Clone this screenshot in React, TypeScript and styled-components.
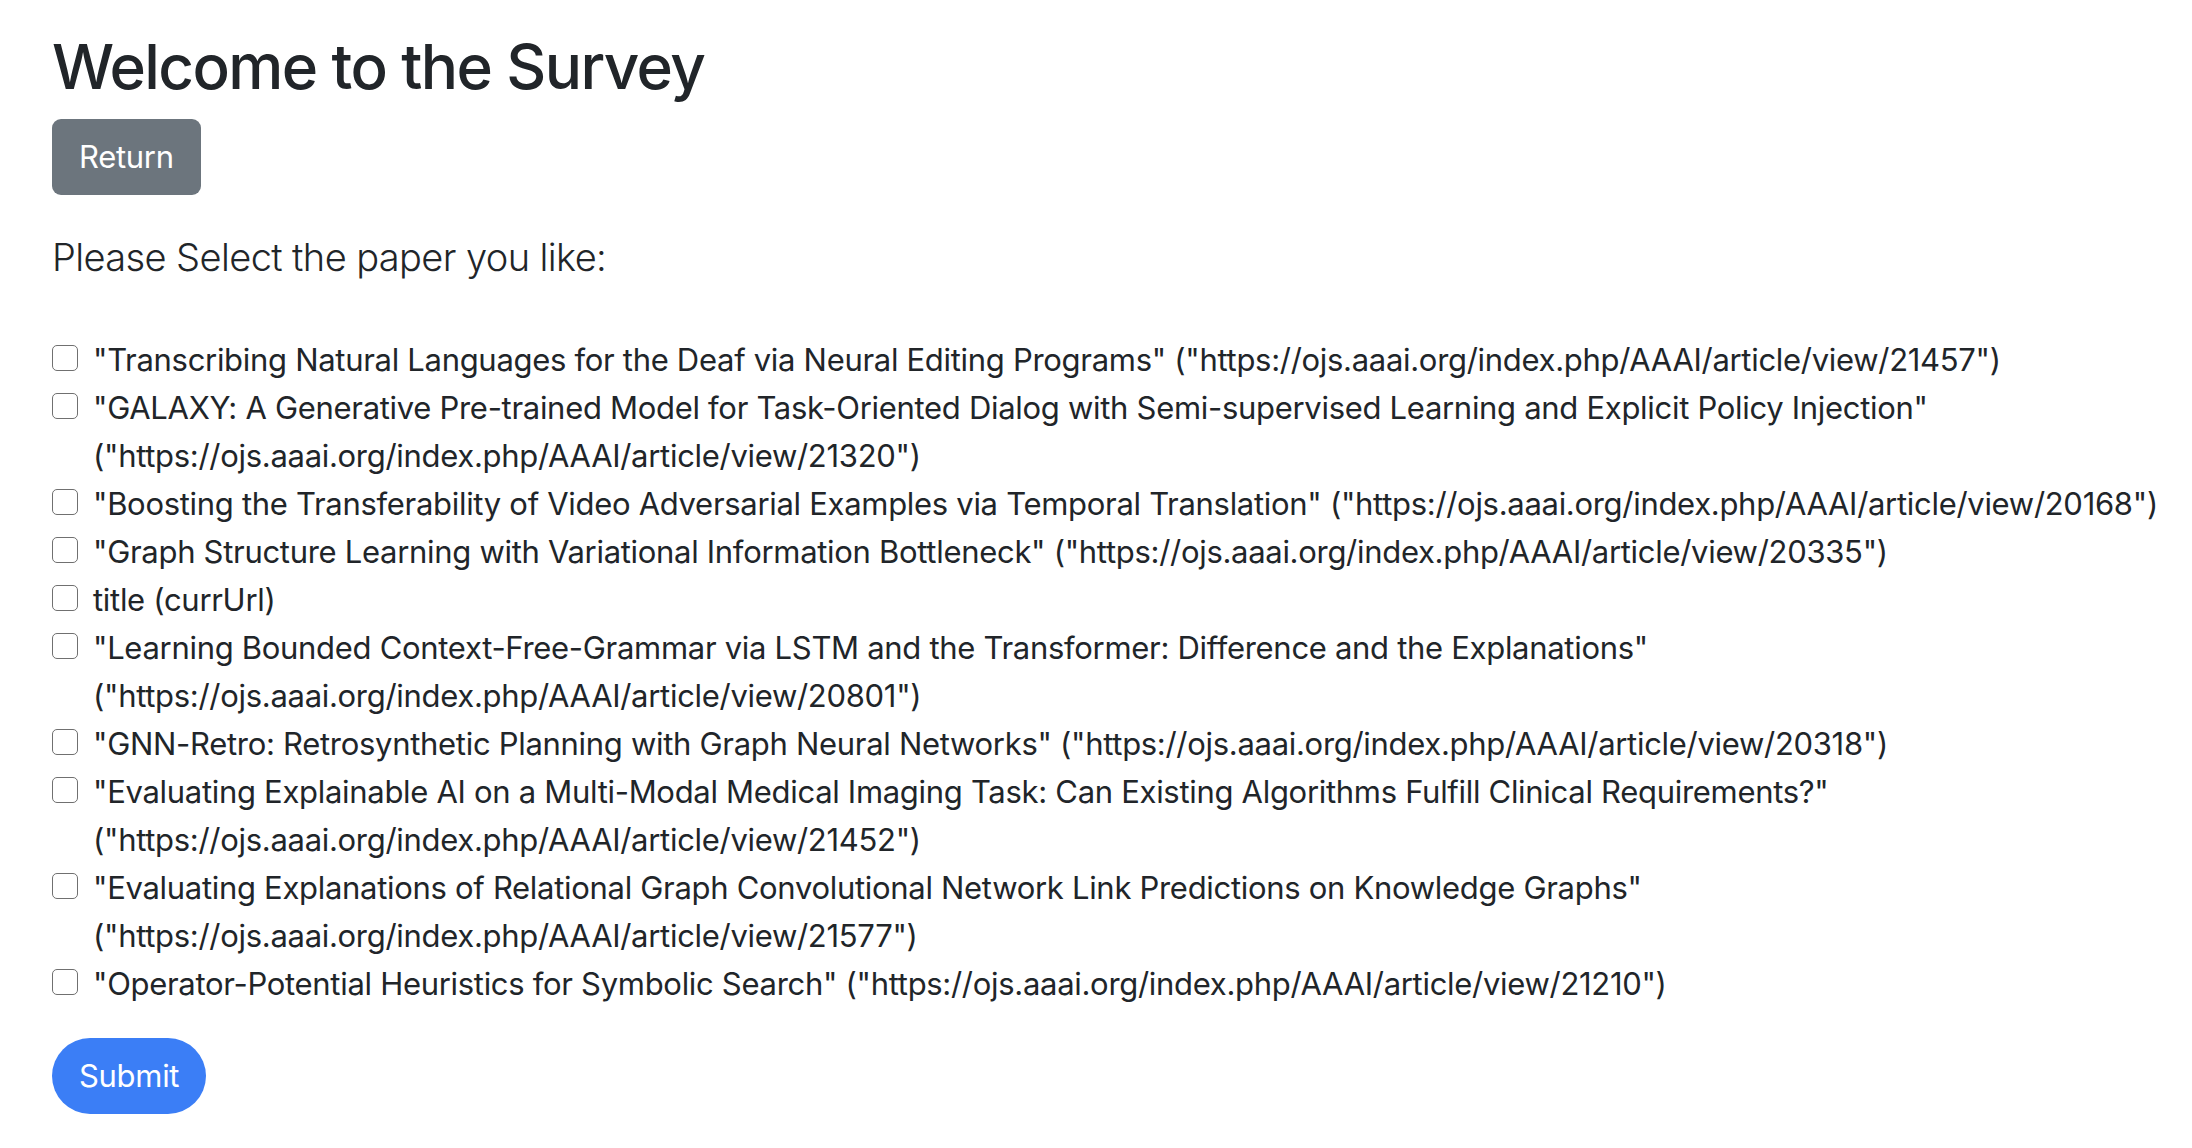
import React from "react";
import styled, { createGlobalStyle } from "styled-components";

const GlobalStyle = createGlobalStyle`
  html, body {
    margin: 0;
    padding: 0;
    background: #ffffff;
  }
  body {
    font-family: Inter, "Noto Sans", "Liberation Sans", sans-serif;
    color: #212529;
    -webkit-font-smoothing: antialiased;
  }
  * { box-sizing: border-box; }
`;

const Page = styled.main`
  display: flex;
  flex-direction: column;
  align-items: flex-start;
  padding: 28px 52px 40px;
`;

const Title = styled.h1`
  margin: 0 0 14px;
  font-size: 62px;
  font-weight: 500;
  line-height: 77px;
  letter-spacing: -1.6px;
`;

const Button = styled.button<{ $variant: "secondary" | "primary" }>`
  display: inline-flex;
  align-items: center;
  justify-content: center;
  height: 76px;
  padding: 0 27px;
  border: none;
  font-family: inherit;
  font-size: 31px;
  font-weight: 400;
  line-height: 48px;
  letter-spacing: -0.3px;
  color: #ffffff;
  cursor: pointer;
  background: ${(p) => (p.$variant === "primary" ? "#3b7ef6" : "#6c757d")};
  border-radius: ${(p) => (p.$variant === "primary" ? "999px" : "9px")};
`;

const Prompt = styled.p`
  margin: 34px 0 50px;
  font-size: 38px;
  font-weight: 300;
  line-height: 57px;
  letter-spacing: -0.6px;
`;

const Form = styled.form`
  display: flex;
  flex-direction: column;
  align-items: flex-start;
`;

const List = styled.div`
  display: flex;
  flex-direction: column;
  margin-bottom: 30px;
`;

const Item = styled.label`
  display: flex;
  align-items: flex-start;
  gap: 15px;
  font-size: 31px;
  font-weight: 400;
  line-height: 48px;
  letter-spacing: -0.3px;
  cursor: pointer;
`;

const Box = styled.input.attrs({ type: "checkbox" })`
  appearance: none;
  -webkit-appearance: none;
  flex-shrink: 0;
  width: 26px;
  height: 26px;
  margin: 9px 0 0;
  border: 1.6px solid #707070;
  border-radius: 5px;
  background: #ffffff;
`;

const Text = styled.span<{ $oneLine: boolean }>`
  display: block;
  white-space: ${(p) => (p.$oneLine ? "nowrap" : "normal")};
`;

const Url = styled.span<{ $newLine: boolean }>`
  display: ${(p) => (p.$newLine ? "block" : "inline")};
  white-space: nowrap;
`;

type Paper = { title: string; url?: string; wrap?: boolean };

const base = "https://ojs.aaai.org/index.php/AAAI/article/view/";

const papers: Paper[] = [
  { title: "Transcribing Natural Languages for the Deaf via Neural Editing Programs", url: "21457" },
  {
    title:
      "GALAXY: A Generative Pre-trained Model for Task-Oriented Dialog with Semi-supervised Learning and Explicit Policy Injection",
    url: "21320",
    wrap: true,
  },
  { title: "Boosting the Transferability of Video Adversarial Examples via Temporal Translation", url: "20168" },
  { title: "Graph Structure Learning with Variational Information Bottleneck", url: "20335" },
  { title: "" },
  {
    title: "Learning Bounded Context-Free-Grammar via LSTM and the Transformer: Difference and the Explanations",
    url: "20801",
    wrap: true,
  },
  { title: "GNN-Retro: Retrosynthetic Planning with Graph Neural Networks", url: "20318" },
  {
    title:
      "Evaluating Explainable AI on a Multi-Modal Medical Imaging Task: Can Existing Algorithms Fulfill Clinical Requirements?",
    url: "21452",
    wrap: true,
  },
  {
    title: "Evaluating Explanations of Relational Graph Convolutional Network Link Predictions on Knowledge Graphs",
    url: "21577",
    wrap: true,
  },
  { title: "Operator-Potential Heuristics for Symbolic Search", url: "21210" },
];

export default function App() {
  return (
    <>
      <GlobalStyle />
      <Page>
        <Title>Welcome to the Survey</Title>
        <Button type="button" $variant="secondary">
          Return
        </Button>
        <Prompt>Please Select the paper you like:</Prompt>
        <Form onSubmit={(e) => e.preventDefault()}>
          <List>
            {papers.map((p, i) => (
              <Item key={i}>
                <Box />
                {p.url ? (
                  <Text $oneLine={!p.wrap}>
                    "{p.title}"{p.wrap ? "" : " "}
                    <Url $newLine={!!p.wrap}>("{base + p.url}")</Url>
                  </Text>
                ) : (
                  <Text $oneLine>title (currUrl)</Text>
                )}
              </Item>
            ))}
          </List>
          <Button type="submit" $variant="primary">
            Submit
          </Button>
        </Form>
      </Page>
    </>
  );
}
